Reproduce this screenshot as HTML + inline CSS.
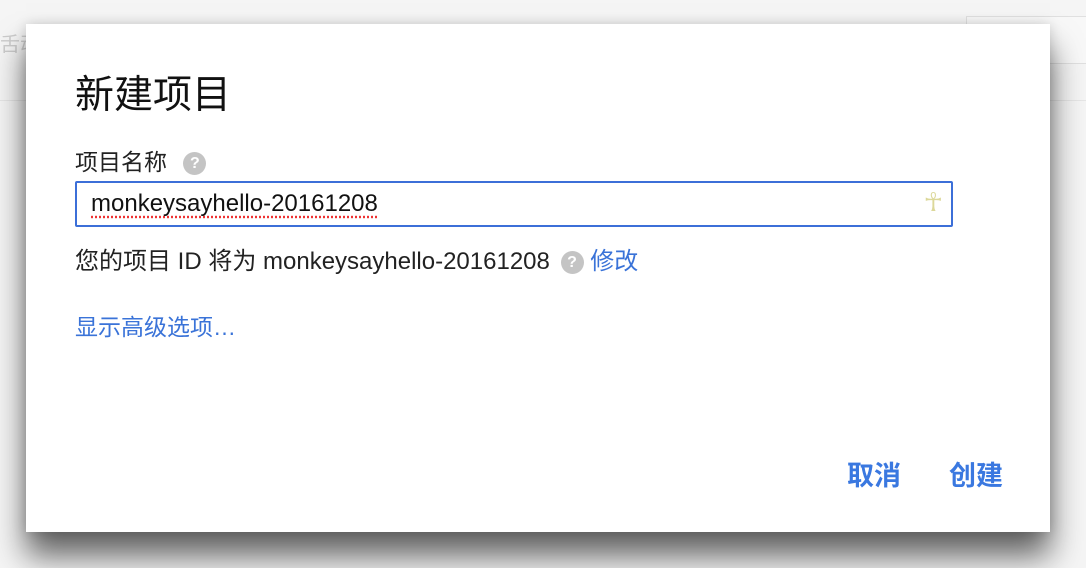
<!DOCTYPE html><html><head><meta charset="utf-8"><style>
body{margin:0;width:1086px;height:568px;overflow:hidden;background:#f5f5f5;font-family:"Liberation Sans","Noto Sans CJK SC",sans-serif;position:relative}
.bg1{position:absolute;left:0;top:28px;color:#ccc;font-size:20px}
.bg2{position:absolute;left:966px;top:16px;width:120px;height:46px;border:1px solid #e0e0e0;background:#f8f8f8}
.bgl{position:absolute;left:0;top:100px;width:1086px;height:1px;background:#e6e6e6}
.d{position:absolute;left:26px;top:24px;width:1024px;height:508px;background:#fff;box-shadow:0 24px 30px rgba(0,0,0,.6),0 0 12px rgba(0,0,0,.15)}
.t{position:absolute;left:49px;top:40px;font-size:39px;color:#111}
.l{position:absolute;left:49px;top:119px;font-size:23px;color:#222}
.q{display:inline-block;width:23px;height:23px;border-radius:50%;background:#c4c4c4;color:#fff;font-size:16px;font-weight:bold;text-align:center;line-height:23px;vertical-align:middle;margin-left:10px}
.in{position:absolute;left:49px;top:157px;width:874px;height:42px;border:2px solid #3c6fd8;border-radius:2px}
.in span{position:absolute;left:14px;top:7px;font-size:24px;color:#111;text-decoration:underline dotted #e33;text-underline-offset:5px}
.id{position:absolute;left:49px;top:217px;font-size:24px;color:#222}
a{color:#3a73d8;text-decoration:none}
.adv{position:absolute;left:49px;top:284px;font-size:23px;color:#3a73d8}
.b{position:absolute;top:430px;font-size:27px;font-weight:bold;color:#3a78e0}
</style></head><body>
<div class="bg1">舌动</div><div class="bg2"></div><div class="bgl"></div>
<div class="d">
<div class="t">新建项目</div>
<div class="l">项目名称 <span class="q">?</span></div>
<div class="in"><span>monkeysayhello-20161208</span><div style="position:absolute;right:8px;top:4px;color:#dcd89a;font-size:26px">☥</div></div>
<div class="id">您的项目 ID 将为 monkeysayhello-20161208 <span class="q" style="margin-left:4px">?</span> <a>修改</a></div>
<div class="adv">显示高级选项…</div>
<div class="b" style="left:821px">取消</div>
<div class="b" style="left:923px">创建</div>
</div>
</body></html>
